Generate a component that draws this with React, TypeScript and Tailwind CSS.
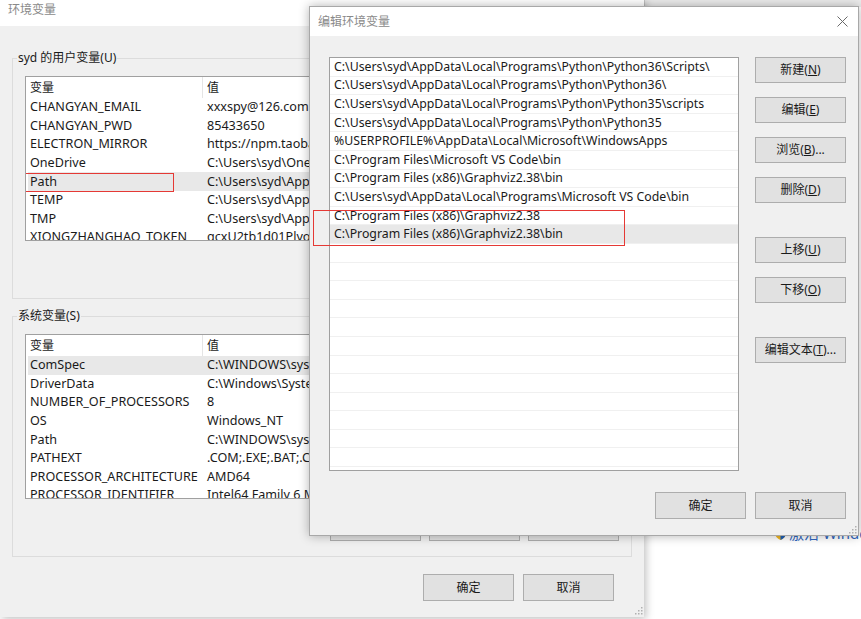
const userVars = [
  ['CHANGYAN_EMAIL', 'xxxspy@126.com'],
  ['CHANGYAN_PWD', '85433650'],
  ['ELECTRON_MIRROR', 'https://npm.taobao.org/mirrors/electron/'],
  ['OneDrive', 'C:\\Users\\syd\\OneDrive'],
  ['Path', 'C:\\Users\\syd\\AppData\\Local\\Programs\\Python\\Python36\\Scripts\\'],
  ['TEMP', 'C:\\Users\\syd\\AppData\\Local\\Temp'],
  ['TMP', 'C:\\Users\\syd\\AppData\\Local\\Temp'],
  ['XIONGZHANGHAO_TOKEN', 'gcxU2tb1d01Plyo8kJ3mQ'],
];

const sysVars = [
  ['ComSpec', 'C:\\WINDOWS\\system32\\cmd.exe'],
  ['DriverData', 'C:\\Windows\\System32\\Drivers\\DriverData'],
  ['NUMBER_OF_PROCESSORS', '8'],
  ['OS', 'Windows_NT'],
  ['Path', 'C:\\WINDOWS\\system32;C:\\WINDOWS;'],
  ['PATHEXT', '.COM;.EXE;.BAT;.CMD;.VBS;.VBE;.JS'],
  ['PROCESSOR_ARCHITECTURE', 'AMD64'],
  ['PROCESSOR_IDENTIFIER', 'Intel64 Family 6 Model 142'],
];

const paths = [
  'C:\\Users\\syd\\AppData\\Local\\Programs\\Python\\Python36\\Scripts\\',
  'C:\\Users\\syd\\AppData\\Local\\Programs\\Python\\Python36\\',
  'C:\\Users\\syd\\AppData\\Local\\Programs\\Python\\Python35\\scripts',
  'C:\\Users\\syd\\AppData\\Local\\Programs\\Python\\Python35',
  '%USERPROFILE%\\AppData\\Local\\Microsoft\\WindowsApps',
  'C:\\Program Files\\Microsoft VS Code\\bin',
  'C:\\Program Files (x86)\\Graphviz2.38\\bin',
  'C:\\Users\\syd\\AppData\\Local\\Programs\\Microsoft VS Code\\bin',
  'C:\\Program Files (x86)\\Graphviz2.38',
  'C:\\Program Files (x86)\\Graphviz2.38\\bin',
];

const Btn = ({ children, className = '' }: { children?: React.ReactNode; className?: string }) => (
  <div
    className={`flex items-center justify-center bg-[#e1e1e1] border border-[#adadad] text-[12px] text-[#1a1a1a] ${className}`}
  >
    {children}
  </div>
);

const Grip = () => (
  <svg width="8" height="8" viewBox="0 0 8 8">
    <rect x="6" y="0" width="1.5" height="1.5" fill="#b0b0b0" />
    <rect x="3" y="3" width="1.5" height="1.5" fill="#b0b0b0" />
    <rect x="6" y="3" width="1.5" height="1.5" fill="#b0b0b0" />
    <rect x="0" y="6" width="1.5" height="1.5" fill="#b0b0b0" />
    <rect x="3" y="6" width="1.5" height="1.5" fill="#b0b0b0" />
    <rect x="6" y="6" width="1.5" height="1.5" fill="#b0b0b0" />
  </svg>
);

const VarList = ({ rows, selected, marked }: { rows: string[][]; selected: number; marked?: number }) => (
  <div className="h-[165px] bg-white border border-[#a0a0a0] overflow-hidden">
    <div className="flex h-[21px] items-center text-[12px] text-[#1a1a1a]">
      <div className="w-[177px] pl-[4px] h-full flex items-center border-r border-[#e5e5e5]">变量</div>
      <div className="pl-[4px]">值</div>
    </div>
    {rows.map(([k, v], i) => (
      <div
        key={k}
        className={`relative flex h-[18.6px] items-center mx-[2px] text-[12.6px] leading-[16px] text-[#1a1a1a] whitespace-nowrap ${
          i === selected ? 'bg-[#e8e8e8]' : ''
        }`}
      >
        <div className="w-[175px] pl-[2px]">{k}</div>
        <div className="pl-[4px]">{v}</div>
        {i === marked && (
          <div className="absolute left-[-4px] top-[1px] w-[150px] h-[19px] border border-[#e53935]" />
        )}
      </div>
    ))}
  </div>
);

const Group = ({ title, rows, selected, marked }: { title: string; rows: string[][]; selected: number; marked?: number }) => (
  <div className="relative mx-[12px] h-[241px] border border-[#dcdcdc] pt-[17px] px-[12px]">
    <span className="absolute left-[4px] top-[-10px] bg-[#f0f0f0] px-[1px] text-[12px] text-[#1a1a1a]">{title}</span>
    <VarList rows={rows} selected={selected} marked={marked} />
    <div className="flex justify-end gap-[8px] mt-[16px]">
      <Btn className="w-[91px] h-[26px]">新建(<span className="underline">W</span>)...</Btn>
      <Btn className="w-[91px] h-[26px]">编辑(<span className="underline">I</span>)...</Btn>
      <Btn className="w-[91px] h-[26px]">删除(<span className="underline">L</span>)</Btn>
    </div>
  </div>
);

export default function App() {
  return (
    <div className="relative w-[861px] h-[619px] bg-white overflow-hidden font-['Noto_Sans','Noto_Sans_CJK_SC',sans-serif]">
      {/* strip of another window at the very top */}
      <div className="absolute left-[644px] top-0 w-[217px] h-[7px] bg-[#ececec] border-l border-[#d0d0d0]" />

      {/* desktop watermark */}
      <div className="absolute left-[775px] top-[522px] flex items-center gap-[3px] whitespace-nowrap text-[15px] text-[#2f66c0]">
        <svg width="11" height="13" viewBox="0 0 11 13">
          <path d="M5.5 0 L11 2 L11 6 C11 9.5 8 12 5.5 13 C3 12 0 9.5 0 6 L0 2 Z" fill="#f2b824" />
          <path d="M5.5 0 L11 2 L11 6 C11 9.5 8 12 5.5 13 Z" fill="#1d5fb8" />
        </svg>
        <span>激活 Windows</span>
      </div>

      {/* background window: 环境变量 */}
      <div className="absolute left-0 top-0 w-[644px] h-[617px] flex flex-col bg-[#f0f0f0] shadow-[2px_2px_8px_rgba(0,0,0,0.25)]">
        <div className="h-[26px] bg-white pl-[8px] pt-[1px] text-[12px] text-[#8a8a8a]">环境变量</div>
        <div className="flex-1 flex flex-col pt-[32px]">
          <Group title="syd 的用户变量(U)" rows={userVars} selected={4} marked={4} />
          <div className="h-[17px]" />
          <Group title="系统变量(S)" rows={sysVars} selected={0} />
          <div className="flex justify-end gap-[9px] mt-[17px] pr-[30px]">
            <Btn className="w-[91px] h-[27px]">确定</Btn>
            <Btn className="w-[91px] h-[27px]">取消</Btn>
          </div>
        </div>
        <div className="absolute right-[1px] bottom-[2px]">
          <Grip />
        </div>
      </div>

      {/* dialog: 编辑环境变量 */}
      <div className="absolute left-[309px] top-[6px] w-[550px] h-[530px] flex flex-col border border-[#a8a8a8] bg-[#f0f0f0] shadow-[0_0_10px_rgba(0,0,0,0.3)]">
        <div className="h-[29px] bg-white flex items-center justify-between pl-[8px] pr-[10px]">
          <span className="text-[12px] text-[#8a8a8a]">编辑环境变量</span>
          <svg width="11" height="11" viewBox="0 0 11 11">
            <path d="M0.5 0.5 L10.5 10.5 M10.5 0.5 L0.5 10.5" stroke="#6a6a6a" strokeWidth="1" />
          </svg>
        </div>
        <div className="flex-1 flex flex-col pt-[21px] pl-[19px]">
          <div className="flex">
            <div className="relative w-[410px] h-[414px] bg-white border border-[#a0a0a0] overflow-hidden">
              {Array.from({ length: 22 }).map((_, i) => (
                <div
                  key={i}
                  className={`h-[18.6px] flex items-center pl-[4px] border-b border-[#f0f0f0] text-[12.3px] leading-[16px] text-[#1a1a1a] whitespace-nowrap ${
                    i === 9 ? 'bg-[#e8e8e8]' : ''
                  }`}
                >
                  {paths[i] ?? ''}
                </div>
              ))}
            </div>
            <div className="ml-[16px] flex flex-col gap-[14px] w-[91px]">
              <Btn className="h-[26px]">新建(<span className="underline">N</span>)</Btn>
              <Btn className="h-[26px]">编辑(<span className="underline">E</span>)</Btn>
              <Btn className="h-[26px]">浏览(<span className="underline">B</span>)...</Btn>
              <Btn className="h-[26px]">删除(<span className="underline">D</span>)</Btn>
              <Btn className="h-[26px] mt-[20px]">上移(<span className="underline">U</span>)</Btn>
              <Btn className="h-[26px]">下移(<span className="underline">O</span>)</Btn>
              <Btn className="h-[26px] mt-[20px]">编辑文本(<span className="underline">T</span>)...</Btn>
            </div>
          </div>
          <div className="flex justify-end gap-[9px] mt-[21px] pr-[12px]">
            <Btn className="w-[91px] h-[27px]">确定</Btn>
            <Btn className="w-[91px] h-[27px]">取消</Btn>
          </div>
        </div>
        <div className="absolute right-[1px] bottom-[1px]">
          <Grip />
        </div>
      </div>

      {/* red highlight around the new entries */}
      <div className="absolute left-[313px] top-[210px] w-[312px] h-[36px] border border-[#e53935]" />
    </div>
  );
}
